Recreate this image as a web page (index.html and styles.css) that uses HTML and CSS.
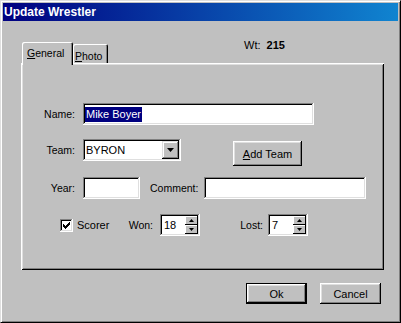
FILE: index.html
```html
<!DOCTYPE html>
<html>
<head>
    <title>Update Wrestler</title>
    <link rel="stylesheet" href="styles.css">
</head>
<body>

<div class="window">
    <div class="titlebar">Update Wrestler</div>

    <div class="tabstrip">
        <div class="tab active"><u>G</u>eneral</div>
        <div class="tab photo"><u>P</u>hoto</div>
        <div class="wt">Wt: <b>215</b></div>
    </div>

    <div class="panel">
        <div class="row">
            <span class="label">Name:</span>
            <div class="field name-field"><span class="selected">Mike Boyer</span></div>
        </div>

        <div class="row row-team">
            <span class="label">Team:</span>
            <div class="field combo">
                <span class="value">BYRON</span>
                <span class="drop">
                    <svg width="7" height="4" viewBox="0 0 7 4"><path d="M0 0h7L3.5 4z" fill="#000"/></svg>
                </span>
            </div>
            <button class="btn add-team"><u>A</u>dd Team</button>
        </div>

        <div class="row row-year">
            <span class="label">Year:</span>
            <div class="field year-field"></div>
            <span class="label comment-label">Comment:</span>
            <div class="field comment-field"></div>
        </div>

        <div class="row row-scorer">
            <div class="check-wrap">
                <span class="checkbox">
                    <svg width="7" height="7" viewBox="0 0 7 7" shape-rendering="crispEdges"><path d="M6 0h1v3h-1v1h-1v1h-1v1h-1v1h-1v-1h-1v-1h-1v-3h1v1h1v1h1v-1h1v-1h1v-1h1z" fill="#000"/></svg>
                </span>
                <span>Scorer</span>
            </div>
            <span class="label won-label">Won:</span>
            <div class="field spin">
                <span class="value">18</span>
                <span class="arrows">
                    <span class="arrow"><svg width="5" height="3" viewBox="0 0 5 3"><path d="M2.5 0L5 3H0z" fill="#000"/></svg></span>
                    <span class="arrow"><svg width="5" height="3" viewBox="0 0 5 3"><path d="M0 0h5L2.5 3z" fill="#000"/></svg></span>
                </span>
            </div>
            <span class="label lost-label">Lost:</span>
            <div class="field spin">
                <span class="value">7</span>
                <span class="arrows">
                    <span class="arrow"><svg width="5" height="3" viewBox="0 0 5 3"><path d="M2.5 0L5 3H0z" fill="#000"/></svg></span>
                    <span class="arrow"><svg width="5" height="3" viewBox="0 0 5 3"><path d="M0 0h5L2.5 3z" fill="#000"/></svg></span>
                </span>
            </div>
        </div>
    </div>

    <div class="footer">
        <button class="btn default">Ok</button>
        <button class="btn">Cancel</button>
    </div>
</div>

</body>
</html>
```

FILE: styles.css
```css
body {
    margin: 0;
    background-color: #c0c0c0;
    font-family: "Liberation Sans", Arial, sans-serif;
    font-size: 11px;
    color: #000;
}

.window {
    width: 401px;
    height: 323px;
    box-sizing: border-box;
    border: 1px solid;
    border-color: #dfdfdf #000 #000 #dfdfdf;
    box-shadow: inset 1px 1px #fff, inset -1px -1px #808080;
    padding: 2px;
    background-color: #c0c0c0;
}

.titlebar {
    height: 18px;
    line-height: 18px;
    padding-left: 1px;
    background: linear-gradient(to right, #000080, #1084d0);
    color: #fff;
    font-weight: bold;
    font-size: 12px;
}

/* tabs */
.tabstrip {
    display: flex;
    align-items: flex-end;
    height: 21px;
    margin-top: 21px;
    padding-left: 19px;
}

.tab {
    position: relative;
    height: 19px;
    box-sizing: border-box;
    line-height: 12px;
    padding-top: 5px;
    font-size: 10.5px;
    border-radius: 2px 2px 0 0;
    box-shadow: inset 1px 1px #fff, inset -1px 0 #000, inset -2px 0 #808080;
}

.tab.active {
    z-index: 1;
    width: 51px;
    height: 23px;
    margin-bottom: -2px;
    padding-left: 5px;
    padding-top: 5px;
    background-color: #c0c0c0;
}

.tab.photo {
    width: 35px;
    padding-left: 2px;
    padding-top: 6px;
}

.wt {
    align-self: flex-start;
    margin-top: -3px;
    margin-left: 136px;
    line-height: 12px;
}

.wt b {
    margin-left: 3px;
}

.panel {
    width: 363px;
    height: 207px;
    box-sizing: border-box;
    margin-left: 18px;
    padding-top: 40px;
    box-shadow: inset 1px 1px #fff, inset -1px -1px #000, inset 2px 2px #dfdfdf, inset -2px -2px #808080;
}

/* form rows */
.row {
    display: flex;
    align-items: center;
    height: 22px;
}

.row-team {
    margin-top: 14px;
}

.row-year {
    margin-top: 16px;
}

.row-scorer {
    margin-top: 15px;
}

.label {
    flex-shrink: 0;
    width: 54px;
    margin-right: 8px;
    text-align: right;
    font-size: 10.5px;
}

.field {
    display: flex;
    align-items: center;
    flex-shrink: 0;
    height: 22px;
    box-sizing: border-box;
    padding: 2px;
    background-color: #fff;
    box-shadow: inset -1px -1px #fff, inset 1px 1px #808080, inset -2px -2px #dfdfdf, inset 2px 2px #000;
}

.name-field {
    width: 231px;
}

.selected {
    background-color: #000080;
    color: #fff;
    padding: 1px 1px;
    line-height: 13px;
}

.combo {
    width: 98px;
}

.value {
    flex: 1;
    padding-left: 1px;
}

.drop {
    display: flex;
    align-items: center;
    justify-content: center;
    width: 17px;
    height: 18px;
    background-color: #c0c0c0;
    box-shadow: inset -1px -1px #000, inset 1px 1px #dfdfdf, inset -2px -2px #808080, inset 2px 2px #fff;
}

.btn {
    flex-shrink: 0;
    width: 61px;
    height: 21px;
    padding: 0;
    border: none;
    background-color: #c0c0c0;
    font-family: inherit;
    font-size: 11px;
    color: #000;
    box-shadow: inset -1px -1px #000, inset 1px 1px #fff, inset -2px -2px #808080, inset 2px 2px #dfdfdf;
}

.btn.default {
    border: 1px solid #000;
}

.add-team {
    width: 69px;
    height: 25px;
    margin-left: 52px;
    margin-top: 7px;
}

.year-field {
    width: 57px;
}

.comment-label {
    width: 48px;
    margin-left: 10px;
    margin-right: 6px;
}

.comment-field {
    width: 162px;
}

.check-wrap {
    display: flex;
    align-items: center;
    gap: 4px;
    width: 60px;
    margin-left: 39px;
    flex-shrink: 0;
}

.checkbox {
    display: flex;
    align-items: center;
    justify-content: center;
    width: 13px;
    height: 13px;
    background-color: #fff;
    box-shadow: inset -1px -1px #fff, inset 1px 1px #808080, inset -2px -2px #dfdfdf, inset 2px 2px #000;
}

.won-label {
    width: 33px;
    margin-right: 7px;
}

.lost-label {
    width: 63px;
    margin-right: 5px;
}

.spin {
    width: 40px;
}

.spin .value {
    padding-left: 2px;
}

.arrows {
    display: flex;
    flex-direction: column;
    width: 13px;
    height: 18px;
}

.arrow {
    display: flex;
    align-items: center;
    justify-content: center;
    height: 9px;
    background-color: #c0c0c0;
    box-shadow: inset -1px -1px #000, inset 1px 1px #fff;
}

.footer {
    display: flex;
    justify-content: flex-end;
    gap: 13px;
    margin-top: 13px;
    padding-right: 17px;
}
```
